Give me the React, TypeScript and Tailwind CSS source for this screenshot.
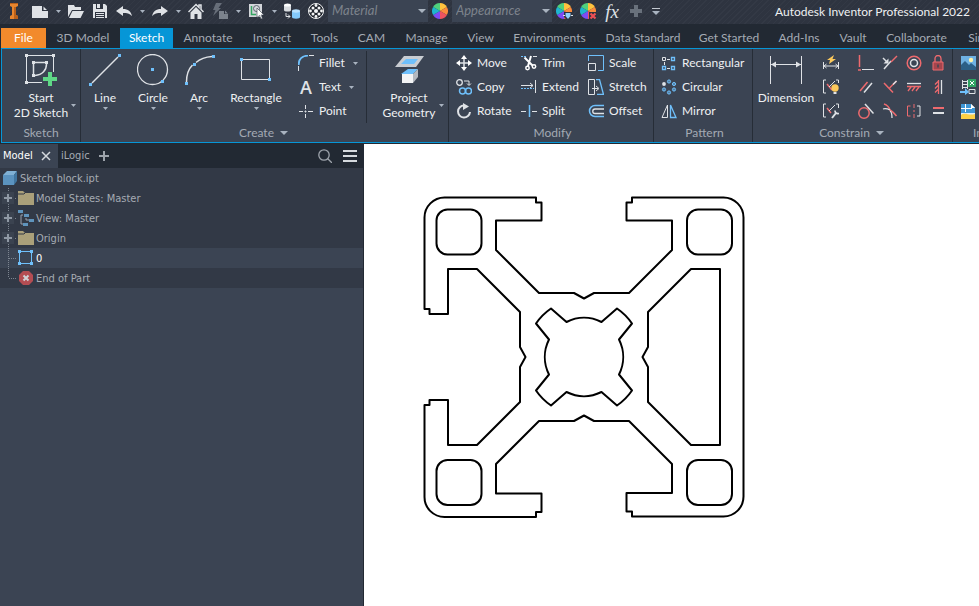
import React, { useState } from 'react';

type Children = { children?: React.ReactNode };

const TABS = [
  '3D Model', 'Sketch', 'Annotate', 'Inspect', 'Tools', 'CAM', 'Manage', 'View', 'Environments',
  'Data Standard', 'Get Started', 'Add-Ins', 'Vault', 'Collaborate', 'Simulation'
];

const BLUE = '#6fc0fb';
const LIGHT = '#dfe2e6';
const RED = '#ee6a6e';

/* ---------- small helpers ---------- */

function Svg({ size = 16, children }: { size?: number } & Children) {
  return (
    <svg width={size} height={size} viewBox={`0 0 ${size} ${size}`} fill="none" stroke={LIGHT} aria-hidden="true" className="shrink-0">
      {children}
    </svg>
  );
}

function Caret({ wide = false }: { wide?: boolean }) {
  return (
    <svg width={wide ? 8 : 5} height={wide ? 4 : 3} viewBox="0 0 8 4" preserveAspectRatio="none" fill="#a9b3c0" aria-hidden="true" className="shrink-0">
      <path d="M0 0h8L4 4z" />
    </svg>
  );
}

function QuickButton({ label, children }: { label: string } & Children) {
  return (
    <button type="button" aria-label={label} title={label} className="w-6 h-[22px] shrink-0 flex items-center justify-center hover:bg-[#3b4453]">
      {children}
    </button>
  );
}

function QuickArrow({ label }: { label: string }) {
  return (
    <button type="button" aria-label={label} className="w-3 h-[22px] shrink-0 flex items-center justify-center">
      <Caret />
    </button>
  );
}

function Combo({ label }: { label: string }) {
  return (
    <div className="grid w-[100px] h-[22px] shrink-0 items-center bg-[#3b4453]">
      <select aria-label={label} className="col-start-1 row-start-1 h-full w-full appearance-none bg-transparent px-1 text-[13px] italic text-[#7d838c] outline-none">
        <option>{label}</option>
      </select>
      <span className="col-start-1 row-start-1 justify-self-end pr-[2px] pointer-events-none">
        <Caret wide />
      </span>
    </div>
  );
}

function Panel({ label, arrow, className = '', children }: { label: string; arrow?: boolean; className?: string } & Children) {
  return (
    <section aria-label={label} className={`shrink-0 flex flex-col border-r border-[#262d37] pt-[2px] ${className}`}>
      <div className="flex h-[72px]">{children}</div>
      <div className="flex h-[19px] items-center justify-center gap-[6px] text-[#a4aab3]">
        {label}
        {arrow && <Caret wide />}
      </div>
    </section>
  );
}

function BigButton({ label, className, arrow = true, icon }: { label: string; className: string; arrow?: boolean; icon: React.ReactNode }) {
  return (
    <button type="button" className={`flex flex-col items-center pt-[3px] leading-[15px] whitespace-nowrap hover:bg-[#4a5464] ${className}`}>
      {icon}
      <span className="mt-1 mb-[2px]">{label}</span>
      {arrow && <Caret />}
    </button>
  );
}

function TwoLineButton({ lines, className, icon }: { lines: [string, string]; className: string; icon: React.ReactNode }) {
  return (
    <button type="button" className={`grid grid-cols-[10px_54px_10px] justify-center content-start justify-items-center pt-[3px] leading-[15px] whitespace-nowrap hover:bg-[#4a5464] ${className}`}>
      <span className="col-start-2">{icon}</span>
      <span className="col-start-2 mt-1">{lines[0]}<br />{lines[1]}</span>
      <span className="col-start-3 pt-[18px]"><Caret /></span>
    </button>
  );
}

function SmallButton({ label, arrow, icon }: { label: string; arrow?: boolean; icon: React.ReactNode }) {
  return (
    <button type="button" className="flex h-6 items-center whitespace-nowrap text-left hover:bg-[#4a5464]">
      <span className="flex w-6 shrink-0 justify-center mr-[1px]">{icon}</span>
      {label}
      {arrow && <span className="ml-2"><Caret /></span>}
    </button>
  );
}

function IconButton({ label, children }: { label: string } & Children) {
  return (
    <button type="button" aria-label={label} title={label} className="flex size-6 items-center justify-center hover:bg-[#4a5464]">
      {children}
    </button>
  );
}

/* ---------- quick access icons ---------- */

function Wheel({ children }: Children) {
  return (
    <Svg size={18}>
      <g stroke="none">
        <path d="M9 9V1a8 8 0 0 0-6.900 4z" fill="#4fd07c" />
        <path d="M9 9V1a8 8 0 0 1 6.900 4z" fill="#ffc23d" />
        <path d="M9 9l6.900-4a8 8 0 0 1 0 8z" fill="#fb8b3c" />
        <path d="M9 9l6.900 4A8 8 0 0 1 9 17z" fill="#ee5360" />
        <path d="M9 9v8a8 8 0 0 1-6.900-4z" fill="#7d4bf5" />
        <path d="M9 9l-6.900 4a8 8 0 0 1 0-8z" fill="#1fb5cf" />
      </g>
      {children}
    </Svg>
  );
}

function QuickAccess() {
  return (
    <>
      <span className="w-7 h-[22px] shrink-0 flex items-center justify-center">
        <svg width="10" height="16" viewBox="0 0 10 16" aria-label="Inventor" role="img">
          <path d="M1 0h8v3L7 4v8l2 1v3H1v-3l2-1V4L1 3z" fill="#e8862e" />
          <path d="M1 0h8v1H1zM5 4h2v8l2 1v3H5z" fill="#b9611b" />
        </svg>
      </span>
      <QuickButton label="New">
        <Svg><path d="M0 3h10v5h6v7H0zM11.500 3.500L15 7h-3.500z" fill={LIGHT} stroke="none" /></Svg>
      </QuickButton>
      <QuickArrow label="New options" />
      <QuickButton label="Open">
        <Svg><path d="M0 2h6l1 2h6v3H4L0 14zM4.500 8H16l-3.500 7H1z" fill={LIGHT} stroke="none" /></Svg>
      </QuickButton>
      <QuickButton label="Save">
        <Svg>
          <path d="M1 1h12l2 2v12H1z" fill={LIGHT} stroke="none" />
          <path d="M4 1h7v5H4zM3 9h10v6H3z" fill="#2d333f" stroke="none" />
          <path d="M5 1h3v4H5zM4 10h8v1H4zM4 12h8v1H4zM4 14h8v1H4z" fill={LIGHT} stroke="none" />
        </Svg>
      </QuickButton>
      <QuickButton label="Undo">
        <Svg><path d="M0 8l7-5v3c5 0 8 2.500 9 7-2.500-2.500-5-3-9-3v3z" fill={LIGHT} stroke="none" /></Svg>
      </QuickButton>
      <QuickArrow label="Undo options" />
      <QuickButton label="Redo">
        <Svg><path d="M16 8L9 3v3C4 6 1 8.500 0 13c2.500-2.500 5-3 9-3v3z" fill={LIGHT} stroke="none" /></Svg>
      </QuickButton>
      <QuickArrow label="Redo options" />
      <QuickButton label="Home">
        <Svg>
          <path d="M0.500 9L8 1.500l3 3V2h2v4.500L15.500 9" strokeWidth="1.500" />
          <path d="M8 4l5.500 5.500V16h-4v-5h-3v5h-4V9.500z" fill={LIGHT} stroke="none" />
        </Svg>
      </QuickButton>
      <QuickButton label="Update">
        <Svg>
          <path d="M4 0h6L6.500 5H9L1 13l2.500-6H1z" fill="#676e79" stroke="none" />
          <path d="M7 8h5v3h4v5H7zM13 7.500l3 3h-3z" fill="#7b828c" stroke="none" />
        </Svg>
      </QuickButton>
      <QuickArrow label="Update options" />
      <QuickButton label="Select">
        <Svg>
          <path d="M1 1h13v13H1z" fill="#d3d6da" stroke="none" />
          <path d="M3.500 3v8.500H8" stroke="#35a562" strokeWidth="1.500" />
          <circle cx="8.500" cy="5.500" r="3" stroke="#5b636f" />
          <path d="M9 5l7 7h-3l1.500 3.500-1.500.500-1.500-3.500-2.500 2z" fill="#fff" stroke="#333b47" strokeWidth="0.600" />
        </Svg>
      </QuickButton>
      <QuickArrow label="Select options" />
      <QuickButton label="Derive">
        <Svg>
          <g stroke="none">
            <path d="M0 2v5a3.500 1.500 0 0 0 7 0V2z" fill="#d9dce0" />
            <ellipse cx="3.500" cy="2" rx="3.500" ry="1.600" fill="#fff" />
            <path d="M8 8v6a4 1.700 0 0 0 8 0V8z" fill="#83c9fb" />
            <ellipse cx="12" cy="8" rx="4" ry="1.700" fill="#b9e2ff" />
          </g>
          <path d="M2 10v3.500h4M4 11.500l2 2-2 2" />
        </Svg>
      </QuickButton>
      <QuickButton label="Pattern sphere">
        <Svg>
          <circle cx="8" cy="8" r="7.500" fill="#20252d" stroke="#f4f5f6" />
          <g fill="#f4f5f6" stroke="none">
            <circle cx="8" cy="8" r="2" />
            <circle cx="5" cy="5" r="1.500" /><circle cx="11" cy="5" r="1.500" />
            <circle cx="5" cy="11" r="1.500" /><circle cx="11" cy="11" r="1.500" />
            <circle cx="8" cy="2.500" r="1.400" /><circle cx="8" cy="13.500" r="1.400" />
            <circle cx="2.500" cy="8" r="1.400" /><circle cx="13.500" cy="8" r="1.400" />
          </g>
        </Svg>
      </QuickButton>
      <Combo label="Material" />
      <QuickButton label="Colors"><Wheel /></QuickButton>
      <Combo label="Appearance" />
      <QuickButton label="Adjust appearance">
        <Wheel>
          <path d="M9 10h8v4l-2 4h-3l-3-3z" fill="#2d333f" stroke="none" />
          <path d="M10.500 11h5v3l-2.500 3-2.500-3z" fill="#8fd0fb" stroke="none" />
          <path d="M8 13.500h2M16 13.500h2" />
        </Wheel>
      </QuickButton>
      <QuickButton label="Clear appearance">
        <Wheel>
          <path d="M10 10h8v8h-8z" fill="#2d333f" stroke="none" />
          <path d="M11.500 11.500l5 5M16.500 11.500l-5 5" stroke="#ee4f55" strokeWidth="2.200" />
        </Wheel>
      </QuickButton>
      <QuickButton label="Parameters">
        <span className="font-['Liberation_Serif',serif] text-[19px] leading-none italic text-[#dfe2e6]">fx</span>
      </QuickButton>
      <QuickButton label="Add">
        <Svg><path d="M8 2v12M2 8h12" stroke="#69717c" strokeWidth="4" /></Svg>
      </QuickButton>
      <button type="button" aria-label="Customize toolbar" className="w-4 h-[22px] shrink-0 flex flex-col gap-[2px] items-center justify-center">
        <span className="h-px w-2 bg-[#c3c9d1]" />
        <Caret wide />
      </button>
    </>
  );
}

/* ---------- ribbon icons ---------- */

const icons = {
  sketch: (
    <Svg size={32}>
      <path d="M1.500 3v25M3 1.500h25M28.500 3v15M3 28.500h14" />
      <path d="M8.500 10v11M10 8.500h10M21.500 10c0 6-4 11-11.500 11.500" strokeWidth="1.500" />
      <path d="M0 0h3v3H0zM27 0h3v3h-3zM0 27h3v3H0zM7 7h3v3H7zM20 7h3v3h-3zM7 20h3v3H7z" fill={LIGHT} stroke="none" />
      <path d="M25 18v14M18 25h14" stroke="#5fd886" strokeWidth="4" />
    </Svg>
  ),
  line: (
    <Svg size={32}>
      <path d="M3 29L29 3" strokeWidth="1.500" />
      <path d="M0 29h3v3H0zM29 0h3v3h-3z" fill={BLUE} stroke="none" />
    </Svg>
  ),
  circle: (
    <Svg size={32}>
      <circle cx="15.500" cy="15.500" r="15" strokeWidth="1.300" />
      <path d="M14 14h3v3h-3zM24 26h3v3h-3z" fill={BLUE} stroke="none" />
    </Svg>
  ),
  arc: (
    <Svg size={32}>
      <path d="M3.500 28c0-7 2-13 6-17M13 8.500C17 5 22 3 29 2.500" strokeWidth="1.500" />
      <path d="M2 28h3v3H2zM10 9h3v3h-3zM29 1h3v3h-3z" fill={BLUE} stroke="none" />
    </Svg>
  ),
  rect: (
    <Svg size={32}>
      <path d="M1.500 5.500h28v20h-28z" />
      <path d="M0 4h3v3H0zM28 24h3v3h-3z" fill={BLUE} stroke="none" />
    </Svg>
  ),
  project: (
    <Svg size={32}>
      <g stroke="none">
        <path d="M11 2h20l-8 11H2z" fill="#c9cdd2" />
        <path d="M13 5h12l-4 5H8z" fill={BLUE} />
        <path d="M8 20l7-5h10l-5 5z" fill={BLUE} />
        <path d="M9 20h11v9H9z" fill="#f3f4f5" />
        <path d="M20 20l5-5v8l-5 6z" fill="#b4b9c0" />
      </g>
    </Svg>
  ),
  dimension: (
    <Svg size={32}>
      <path d="M.500 2v28M31.500 2v28M1 10.500h30" />
      <path d="M1 10.500l5-3v6zM31 10.500l-5-3v6z" fill={LIGHT} stroke="none" />
    </Svg>
  ),
  fillet: (
    <Svg>
      <path d="M.500 16v-5M11 .500h5" />
      <path d="M.700 10C.500 4 4 .700 10 .700" stroke={BLUE} strokeWidth="1.800" />
    </Svg>
  ),
  text: (
    <span aria-hidden="true" className="font-['Open_Sans',sans-serif] text-[18px] leading-none font-semibold text-[#dfe2e6]">A</span>
  ),
  point: (
    <Svg><path d="M1 8.500h4M10 8.500h5M7.500 2v4M7.500 11v4M6.500 8.500h2M7.500 7.500v2" /></Svg>
  ),
  move: (
    <Svg>
      <path d="M8 2v12M2 8h12" strokeWidth="1.500" />
      <path d="M8 0l3 4H5zM8 16l3-4H5zM0 8l4-3v6zM16 8l-4-3v6z" fill="#fff" stroke="none" />
    </Svg>
  ),
  copy: (
    <Svg>
      <circle cx="3.500" cy="3.500" r="2.800" strokeWidth="1.300" />
      <path d="M8 2h5v4M11 4.500l2 2 2-2" />
      <circle cx="6.500" cy="12" r="3" stroke={BLUE} strokeWidth="1.500" />
      <circle cx="12.500" cy="12" r="3" stroke={BLUE} strokeWidth="1.500" />
    </Svg>
  ),
  rotate: (
    <Svg>
      <path d="M8 2.500A6 6 0 1 0 14 9" strokeWidth="2" />
      <path d="M7 0l6 3.500L7 7z" fill={LIGHT} stroke="none" />
    </Svg>
  ),
  trim: (
    <Svg>
      <path d="M0 1.500h5" stroke={BLUE} strokeDasharray="2 1" /><path d="M12 1.500h4" />
      <path d="M3.500 2.500l8 8M10 1l-3 10" stroke="#fff" strokeWidth="2" />
      <circle cx="6.500" cy="13" r="1.700" stroke="#fff" strokeWidth="1.500" /><circle cx="13" cy="11.500" r="1.700" stroke="#fff" strokeWidth="1.500" />
    </Svg>
  ),
  extend: (
    <Svg>
      <path d="M14.500 1v13M0 6.500h12M9 4l3 2.500L9 9" />
      <path d="M0 9.500h13" stroke={BLUE} strokeDasharray="2 1" />
    </Svg>
  ),
  split: (
    <Svg>
      <path d="M0 8.500h5M11 8.500h5" /><path d="M8.500 2v12" stroke={BLUE} strokeWidth="1.500" />
    </Svg>
  ),
  scale: (
    <Svg>
      <path d="M.500 6V.500h15v15H10" stroke={BLUE} /><path d="M.500 8.500h7v7h-7z" />
    </Svg>
  ),
  stretch: (
    <Svg>
      <path d="M.500 .500h6v15h-6z" /><path d="M10 .500h1.500l4 15H9M8 .500h3" stroke={BLUE} strokeWidth="1.300" />
      <path d="M4 9.500h6M8 7l3 2.500L8 12" />
    </Svg>
  ),
  offset: (
    <Svg>
      <path d="M16 2.500H7a5.500 5.500 0 0 0 0 11h9" stroke={BLUE} strokeWidth="1.500" />
      <path d="M16 6H7a2 2 0 0 0 0 4.500h9" strokeWidth="1.300" />
    </Svg>
  ),
  rectangular: (
    <Svg>
      <path d="M1.500 2.500h3v3h-3z" /><path d="M10.500 2.500h3v3h-3zM1.500 11.500h3v3h-3zM10.500 11.500h3v3h-3z" stroke={BLUE} strokeWidth="1.300" />
      <path d="M6 4.500h3M6 13.500h3M3.500 7v3" />
    </Svg>
  ),
  circular: (
    <Svg>
      <circle cx="3" cy="5" r="1.900" fill={LIGHT} stroke="none" />
      <g fill={BLUE} fillOpacity="0.500" stroke={BLUE}>
        <circle cx="8" cy="2.500" r="1.600" /><circle cx="13" cy="5" r="1.600" /><circle cx="13" cy="10.500" r="1.600" />
        <circle cx="8" cy="13.500" r="1.600" /><circle cx="3" cy="10.500" r="1.600" />
      </g>
    </Svg>
  ),
  mirror: (
    <Svg>
      <path d="M6.500 2v12.500H1z" /><path d="M9.500 2v12.500H15z" stroke={BLUE} strokeWidth="1.300" />
    </Svg>
  )
};

const CONSTRAINT_TOOLS = [
  {
    label: 'Auto Dimension', icon: (
      <Svg>
        <path d="M.500 7v7M15.500 7v7M1 11h14M3.500 9L1 11l2.500 2M12.500 9l2.500 2-2.500 2" />
        <path d="M11 0L4 5h3l-1 4 7-5h-3.500z" fill="#fcc95c" stroke="none" />
      </Svg>
    )
  },
  {
    label: 'Show Constraints', icon: (
      <Svg>
        <path d="M3 1H.500v13H3M13 1h2.500v3" /><path d="M4 5l5 6" stroke={RED} strokeWidth="1.500" /><path d="M6 8l6-6" />
        <circle cx="12" cy="9" r="3.700" fill="#fcc95c" stroke="none" /><path d="M10.500 14h3" strokeWidth="2" />
      </Svg>
    )
  },
  {
    label: 'Constraint Settings', icon: (
      <Svg>
        <path d="M3 1H.500v13H3M13 1h2.500v4" /><path d="M4 5l4 5" stroke={RED} strokeWidth="1.500" /><path d="M6 8l6-6" />
        <path d="M9 15l4-5" strokeWidth="2" /><path d="M12 7.500c0 2 1 3.500 4 3" strokeWidth="1.700" />
      </Svg>
    )
  }
];

// four per row
const CONSTRAINTS = [
  {
    label: 'Coincident', icon: (
      <Svg><path d="M1.500 0v12M0 15h3" stroke={RED} strokeWidth="1.500" /><path d="M4 14.500h12" /></Svg>
    )
  },
  {
    label: 'Collinear', icon: (
      <Svg>
        <path d="M2 14l7-8" strokeWidth="1.500" /><path d="M9 7l6-6" stroke={RED} strokeWidth="1.500" />
        <path d="M6.500 8.500v-5l-5 5z" fill={LIGHT} stroke="none" /><path d="M1 3l4 4" strokeWidth="1.500" />
      </Svg>
    )
  },
  { label: 'Concentric', icon: <Svg><circle cx="8" cy="8" r="6.800" stroke={RED} strokeWidth="1.500" /><circle cx="8" cy="8" r="3.500" strokeWidth="1.500" /></Svg> },
  {
    label: 'Fix', icon: (
      <Svg>
        <path d="M3 7h10v8H3z" fill="#a4454d" stroke={RED} /><path d="M5 7V3.500a3 3 0 0 1 6 0V7" stroke={RED} strokeWidth="1.300" />
        <path d="M8 9.500v3" stroke="#3b4453" strokeWidth="1.500" />
      </Svg>
    )
  },
  { label: 'Parallel', icon: <Svg><path d="M2 12l7.500-9" stroke={RED} strokeWidth="1.500" /><path d="M6 13.500l8-9.500" strokeWidth="1.500" /></Svg> },
  { label: 'Perpendicular', icon: <Svg><path d="M2 4l9 9.500" stroke={RED} strokeWidth="1.500" /><path d="M7.500 9L14.500 2" strokeWidth="1.500" stroke={RED} /><path d="M11 5.500L14.500 2" strokeWidth="1.500" /></Svg> },
  {
    label: 'Horizontal', icon: (
      <Svg><path d="M1 4.500h14" strokeWidth="1.300" /><path d="M1 7.500h14M5 8l-3 4M9 8l-3 4M13 8l-3 4" stroke={RED} strokeWidth="1.300" /></Svg>
    )
  },
  {
    label: 'Vertical', icon: (
      <Svg><path d="M11.500 1v14" strokeWidth="1.300" /><path d="M8.500 1v14M8 2.500L5 5.500M8 6.500l-3 3M8 10.500l-3 3" stroke={RED} strokeWidth="1.300" /></Svg>
    )
  },
  { label: 'Tangent', icon: <Svg><circle cx="6" cy="10" r="5.200" stroke={RED} strokeWidth="1.500" /><path d="M7 1l8.500 9.500" strokeWidth="1.500" /></Svg> },
  {
    label: 'Smooth', icon: (
      <Svg><path d="M2 1c3 1 5 3 6 6 2 1 4 3 6.500 6" stroke={RED} strokeWidth="1.500" /><path d="M1 6c3-1 5 0 7 1M8 8c2 1 2 3 2 7" strokeWidth="1.300" /></Svg>
    )
  },
  {
    label: 'Symmetric', icon: (
      <Svg><path d="M4.500 3H1.500v10h3" stroke={RED} /><path d="M8 1v4M8 7v2M8 11v4" stroke={RED} /><path d="M11 3h3v10h-3" /></Svg>
    )
  },
  { label: 'Equal', icon: <Svg><path d="M3 5h11" stroke={RED} strokeWidth="2" /><path d="M3 10h11" strokeWidth="2" /></Svg> }
];

const INSERTS = [
  {
    label: 'Image', icon: (
      <Svg>
        <g stroke="none">
          <path d="M1 1h15v14H1z" fill="#6fb1e2" /><circle cx="11" cy="5" r="2.200" fill="#fff2a8" />
          <path d="M1 10l4-4 4 4 2-2 5 4v3H1z" fill="#2c5f86" />
        </g>
      </Svg>
    )
  },
  {
    label: 'Import Points', icon: (
      <Svg>
        <path d="M2.500 1v9M7.500 1v9M2 2.500h6M2 5.500h6M2 8.500h6M9 10.500h6v4H9z" />
        <path d="M8 0h8v8H8z" fill="#2fa463" stroke="none" /><path d="M10 2l4 4M14 2l-4 4" stroke="#fff" />
        <path d="M0 12h5V9l4 4-4 3v-2H0z" fill="#6fc0fb" stroke="none" />
      </Svg>
    )
  },
  {
    label: 'ACAD', icon: (
      <Svg>
        <g stroke="none">
          <path d="M1 1h10l4 4v11H1z" fill="#dceefb" /><path d="M1 1h10v4h4v5H1z" fill="#3f97d6" /><path d="M11 1l4 4h-4z" fill="#fff" />
          <path d="M1 12c4-3 8 1 14-1v5H1z" fill="#fccf45" />
        </g>
        <path d="M5.500 1v8M1 5.500h11" stroke="#fff" />
      </Svg>
    )
  }
];

/* ---------- model browser ---------- */

const folder = (
  <svg width="16" height="14" viewBox="0 0 16 14" aria-hidden="true"><path d="M0 0h5l2 2h9v12H0z" fill="#aaa07a" /><path d="M0 3h6l1-1" stroke="#323946" fill="none" /></svg>
);

const TREE = [
  { label: 'Model States: Master', open: true, icon: folder },
  {
    label: 'View: Master', open: true, icon: (
      <svg width="16" height="16" viewBox="0 0 16 16" fill="none" aria-hidden="true">
        <path d="M5 5H3v9h2M8 8v2h3" stroke="#9aa2ad" />
        <path d="M0 0h5v3H0zM6 4h5v3H6zM11 9h5v3h-5zM5 13h5v3H5z" fill="#5f94bd" />
      </svg>
    )
  },
  { label: 'Origin', open: true, icon: folder },
  {
    label: '0', selected: true, icon: (
      <svg width="16" height="16" viewBox="0 0 16 16" fill="none" aria-hidden="true">
        <path d="M3 1.500h9M3 13.500h9M1.500 3v9M13.500 3v9" stroke={BLUE} />
        <path d="M0 0h3v3H0zM12 0h3v3h-3zM0 12h3v3H0zM12 12h3v3h-3z" fill={BLUE} />
      </svg>
    )
  },
  {
    label: 'End of Part', last: true, icon: (
      <svg width="14" height="14" viewBox="0 0 14 14" aria-hidden="true">
        <path d="M4 0h6l4 4v6l-4 4H4l-4-4V4z" fill="#b34d53" /><path d="M4.500 4.500l5 5M9.500 4.500l-5 5" stroke="#cfd2d6" strokeWidth="2" />
      </svg>
    )
  }
];

function Branch({ open, last }: { open?: boolean; last?: boolean }) {
  return (
    <svg width="16" height="20" viewBox="0 0 16 20" fill="none" aria-hidden="true" className="shrink-0">
      <path d={last ? 'M8.500 0v10' : 'M8.500 0v20'} stroke="#7d8590" strokeDasharray="1 1" />
      <path d="M9 10.500h7" stroke="#7d8590" strokeDasharray="1 1" />
      {open && <path d="M2 4h12v12H2z" fill="#3b4350" />}
      {open && <path d="M8 6v8M4 10h8" stroke="#8f98a4" strokeWidth="2" />}
    </svg>
  );
}

function Browser() {
  return (
    <aside aria-label="Model browser" className="w-[364px] shrink-0 border-r border-[#222933] bg-[#3b4453] font-['DejaVu_Sans_Condensed','DejaVu_Sans',sans-serif] text-[11px] text-[#a5abb3]">
      <div className="flex h-6 items-center bg-[#222933]">
        <div className="flex h-full w-[58px] items-center justify-between bg-[#3b4453] pl-[3px] pr-[7px] text-white">
          <button type="button">Model</button>
          <button type="button" aria-label="Close Model tab">
            <svg width="10" height="10" viewBox="0 0 10 10" stroke="#d5d9de" strokeWidth="1.500"><path d="M1 1l8 8M9 1L1 9" /></svg>
          </button>
        </div>
        <button type="button" className="w-[36px] pl-[3px] text-left">iLogic</button>
        <button type="button" aria-label="Add tab" className="pl-1">
          <svg width="12" height="12" viewBox="0 0 12 12" stroke="#9da3ab" strokeWidth="2"><path d="M6 1v10M1 6h10" /></svg>
        </button>
        <button type="button" aria-label="Search" className="ml-auto">
          <svg width="14" height="14" viewBox="0 0 14 14" fill="none" stroke="#9da3ab" strokeWidth="1.300"><circle cx="6" cy="6" r="5.200" /><path d="M9.500 9.500L14 14" /></svg>
        </button>
        <button type="button" aria-label="Browser menu" className="ml-[11px] mr-[6px]">
          <svg width="14" height="12" viewBox="0 0 14 12" fill="#d5d9de"><path d="M0 0h14v2H0zM0 5h14v2H0zM0 10h14v2H0z" /></svg>
        </button>
      </div>
      <div className="bg-[#323946]">
        <div className="flex h-5 items-center gap-[3px] pl-[3px]">
          <svg width="14" height="14" viewBox="0 0 14 14" aria-hidden="true">
            <path d="M0 4l4-4h10l-3 4z" fill="#7fb0d4" /><path d="M0 4h11v10H0z" fill="#5b93bf" /><path d="M11 4l3-4v10l-3 4z" fill="#40759f" />
          </svg>
          <span className="pt-[3px]">Sketch block.ipt</span>
        </div>
        <ul>
          {TREE.map(node => (
            <li key={node.label} className={node.selected ? 'flex h-5 items-center bg-[#3b4453] text-white' : 'flex h-5 items-center'}>
              <Branch open={node.open} last={node.last} />
              <span className="flex w-5 shrink-0 justify-center">{node.icon}</span>
              <span className="pt-[3px]">{node.label}</span>
            </li>
          ))}
        </ul>
      </div>
    </aside>
  );
}

/* ---------- sketch: cross-section of an aluminium profile, origin in its centre ---------- */

function Profile() {
  return (
    <svg width="322" height="322" viewBox="-161 -161 322 322" fill="none" stroke="#000" strokeWidth="2" strokeLinejoin="round" role="img" aria-label="Profile sketch">
      <path
        d="M-159.500-48V-139.500a20 20 0 0 1 20-20H-48v5h5.500V-136.500H-88V-107l43 43H-10l10 5.500 10-5.500H45l43-43v-29.500H42.500V-154.500H48v-5h91.500
          a20 20 0 0 1 20 20v279a20 20 0 0 1-20 20H48v-5h-5.500v-18.500H88V107L45 64H10L0 58.500-10 64H-45l-43 43v29.500h45.500v18.500H-48v5H-139.500
          a20 20 0 0 1-20-20V48h5v-5h18.500V88h29l43-43V10l5.500-10-5.500-10V-45l-43-43h-29v45h-18.500v-5z"
      />
      <path d="M136-88v176h-29L64 45V10L58.500 0 64-10v-35l43-43z" />
      <rect x="-147.500" y="-147.500" width="45" height="45" rx="11" />
      <rect x="103" y="-147.500" width="45" height="45" rx="11" />
      <rect x="-147.500" y="103" width="45" height="45" rx="11" />
      <rect x="103" y="103" width="45" height="45" rx="11" />
      <path
        d="M-35-17.500L-48-33.500A58 58 0 0 1-33-48.500L-17.500-35A39 39 0 0 1 17.500-35L33-48.500A58 58 0 0 1 48-33.500L35-17.500
          A39 39 0 0 1 35 17.500L48 33.500A58 58 0 0 1 33 48.500L17.500 35A39 39 0 0 1-17.500 35L-33 48.500A58 58 0 0 1-48 33.500L-35 17.500A39 39 0 0 1-35-17.500z"
      />
    </svg>
  );
}

export default function App() {
  const [tab, setTab] = useState('Sketch');

  return (
    <div className="flex min-h-screen flex-col overflow-hidden bg-[#222933] font-['Lato','Open_Sans',sans-serif] text-[12px] text-[#eef0f2]">
      {/* Title bar */}
      <header className="flex h-6 shrink-0 bg-[#2e3440] bg-[repeating-linear-gradient(135deg,#2e3440_0px,#2e3440_3px,#333945_3px,#333945_4px)]">
        <QuickAccess />
        <h1 className="ml-auto shrink-0 pr-[9px] leading-6 whitespace-nowrap">Autodesk Inventor Professional 2022</h1>
      </header>

      {/* Tabs */}
      <nav className="grid h-6 shrink-0 grid-cols-[45px_74px_53px_70px_58px_47px_47px_63px_45px_93px_94px_78px_62px_46px_81px_78px] items-end overflow-hidden pl-px text-[#a5abb3]">
        <button type="button" className="h-5 bg-[#f28a2c] text-white">File</button>
        {TABS.map(name => (
          <button
            key={name}
            type="button"
            onClick={() => setTab(name)}
            className={`h-5 whitespace-nowrap ${name === tab ? 'bg-[#0696d7] text-white' : 'hover:text-white'}`}
          >
            {name}
          </button>
        ))}
      </nav>

      {/* Ribbon */}
      <div className="ml-px flex shrink-0 overflow-hidden border-y border-l border-[#0696d7] bg-[#3b4453]">
        <Panel label="Sketch">
          <TwoLineButton lines={['Start', '2D Sketch']} icon={icons.sketch} className="w-[78px]" />
        </Panel>
        <Panel label="Create" arrow className="pr-[2px]">
          <BigButton label="Line" icon={icons.line} className="w-[48px]" />
          <BigButton label="Circle" icon={icons.circle} className="w-[48px]" />
          <BigButton label="Arc" icon={icons.arc} className="w-[44px]" />
          <BigButton label="Rectangle" icon={icons.rect} className="w-[70px]" />
          <div className="ml-[3px] mr-[5px] flex w-[73px] flex-col border-r border-[#262d37]">
            <SmallButton label="Fillet" arrow icon={icons.fillet} />
            <SmallButton label="Text" arrow icon={icons.text} />
            <SmallButton label="Point" icon={icons.point} />
          </div>
          <TwoLineButton lines={['Project', 'Geometry']} icon={icons.project} className="w-[74px]" />
        </Panel>
        <Panel label="Modify" className="pl-[3px]">
          <div className="grid grid-cols-[65px_67px_69px]">
            <SmallButton label="Move" icon={icons.move} />
            <SmallButton label="Trim" icon={icons.trim} />
            <SmallButton label="Scale" icon={icons.scale} />
            <SmallButton label="Copy" icon={icons.copy} />
            <SmallButton label="Extend" icon={icons.extend} />
            <SmallButton label="Stretch" icon={icons.stretch} />
            <SmallButton label="Rotate" icon={icons.rotate} />
            <SmallButton label="Split" icon={icons.split} />
            <SmallButton label="Offset" icon={icons.offset} />
          </div>
        </Panel>
        <Panel label="Pattern" className="pl-[3px]">
          <div className="flex w-[95px] flex-col">
            <SmallButton label="Rectangular" icon={icons.rectangular} />
            <SmallButton label="Circular" icon={icons.circular} />
            <SmallButton label="Mirror" icon={icons.mirror} />
          </div>
        </Panel>
        <Panel label="Constrain" arrow className="pr-[2px]">
          <BigButton label="Dimension" arrow={false} icon={icons.dimension} className="w-[66px]" />
          <div className="mr-[11px] flex flex-col">
            {CONSTRAINT_TOOLS.map(c => <IconButton key={c.label} label={c.label}>{c.icon}</IconButton>)}
          </div>
          <div className="grid grid-cols-4">
            {CONSTRAINTS.map(c => <IconButton key={c.label} label={c.label}>{c.icon}</IconButton>)}
          </div>
        </Panel>
        <Panel label="Insert" className="w-[68px] pl-[3px]">
          <div className="flex flex-col">
            {INSERTS.map(c => <IconButton key={c.label} label={c.label}>{c.icon}</IconButton>)}
          </div>
        </Panel>
      </div>

      {/* Workspace */}
      <div className="flex grow pt-px">
        <Browser />
        <main className="grow bg-white pl-[59px] pt-[52px]">
          <Profile />
        </main>
      </div>
    </div>
  );
}
